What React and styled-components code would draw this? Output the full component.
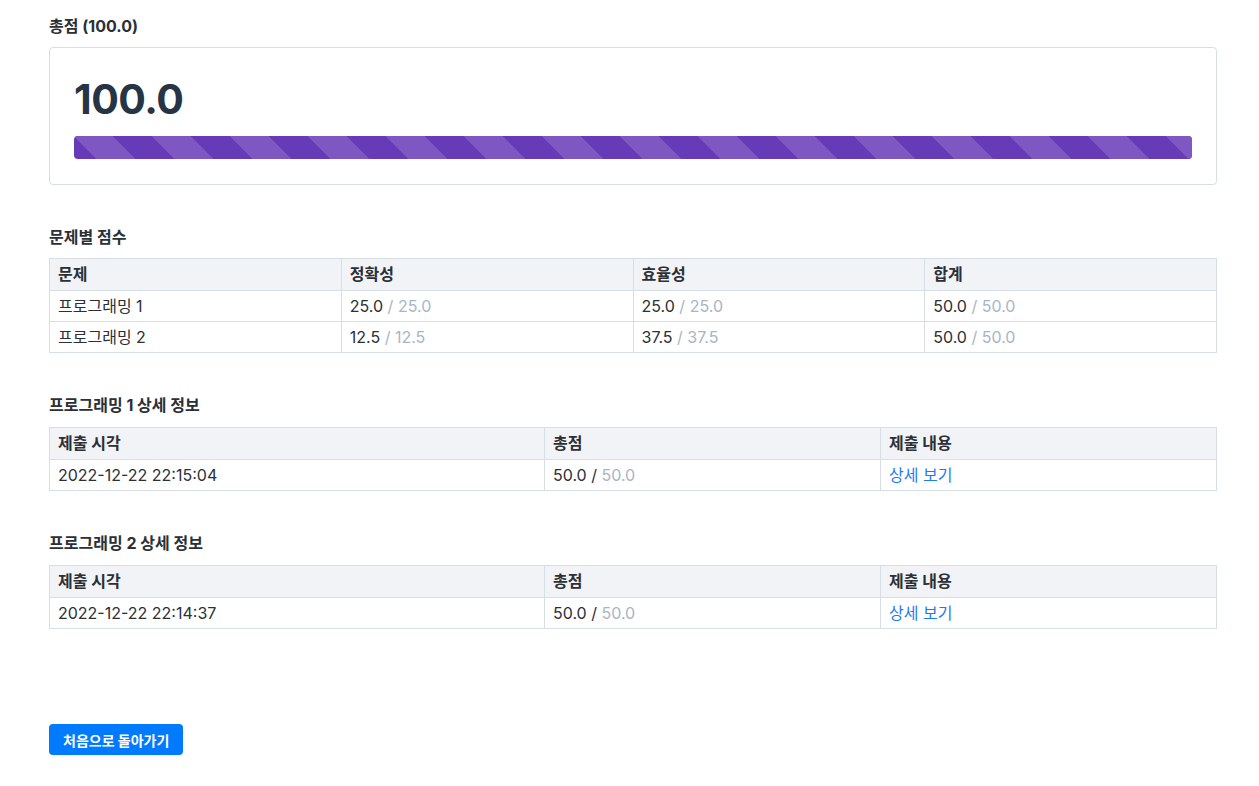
import React from 'react';
import styled, { createGlobalStyle } from 'styled-components';

const GlobalStyle = createGlobalStyle`
    body {
        margin: 0;
        background: #fff;
        font-family: Inter, "Noto Sans CJK KR", sans-serif;
        color: #2b2f36;
    }
`;

const Page = styled.div`
    padding: 16px 42px 30px 49px;
    width: 1168px;
`;

const SectionTitle = styled.h2`
    margin: ${({ $top }) => $top || 0}px 0 ${({ $bottom }) => $bottom || 11}px;
    font-size: 16px;
    line-height: 20px;
    font-weight: 700;
    color: #2b2f36;
`;

const Card = styled.div`
    border: 1px solid #d6dee8;
    border-radius: 4px;
    padding: 27px 24px 25px;
`;

const BigScore = styled.div`
    font-size: 41px;
    line-height: 48px;
    font-weight: 700;
    color: #263445;
    letter-spacing: -0.5px;
`;

const Progress = styled.div`
    margin-top: 13px;
    height: 23px;
    border-radius: 4px;
    overflow: hidden;
    background: #ebe6f5;
`;

const Bar = styled.div`
    height: 100%;
    background-color: #673ab7;
    background-image: linear-gradient(
        45deg,
        #7e57c2 25%,
        transparent 25%,
        transparent 50%,
        #7e57c2 50%,
        #7e57c2 75%,
        transparent 75%,
        transparent
    );
    background-size: 78px 78px;
`;

const Table = styled.table`
    width: 100%;
    border-collapse: collapse;
    table-layout: fixed;
    font-size: 16px;
`;

const Th = styled.th`
    text-align: left;
    font-weight: 700;
    background: #f2f3f7;
    border: 1px solid #d6dee8;
    padding: 5px 8px;
    line-height: 21px;
    width: ${({ $w }) => $w || 'auto'};
`;

const Td = styled.td`
    border: 1px solid #d6dee8;
    padding: 5px 8px 4px;
    line-height: 21px;
    color: #2b2f36;
`;

const Max = styled.span`
    color: #a9b5c4;
`;

const Slash = styled.span`
    color: ${({ $dark }) => ($dark ? '#2b2f36' : '#a9b5c4')};
`;

const Link = styled.a`
    color: #1a7cf5;
    text-decoration: none;
    cursor: pointer;
`;

const Button = styled.button`
    margin-top: 95px;
    height: 31px;
    padding: 0 14px;
    border: none;
    border-radius: 4px;
    background: #007bff;
    color: #fff;
    font-family: inherit;
    font-size: 14px;
    font-weight: 700;
    cursor: pointer;
`;

const Score = ({ got, max, dark }) => (
    <>
        {got} <Slash $dark={dark}>/</Slash> <Max>{max}</Max>
    </>
);

const problems = [
    { name: '프로그래밍 1', acc: ['25.0', '25.0'], eff: ['25.0', '25.0'], sum: ['50.0', '50.0'] },
    { name: '프로그래밍 2', acc: ['12.5', '12.5'], eff: ['37.5', '37.5'], sum: ['50.0', '50.0'] },
];

const details = [
    { name: '프로그래밍 1', time: '2022-12-22 22:15:04', score: ['50.0', '50.0'] },
    { name: '프로그래밍 2', time: '2022-12-22 22:14:37', score: ['50.0', '50.0'] },
];

const App = () => {
    return (
        <Page>
            <GlobalStyle />
            <SectionTitle>총점 (100.0)</SectionTitle>
            <Card>
                <BigScore>100.0</BigScore>
                <Progress>
                    <Bar style={{ width: '100%' }} />
                </Progress>
            </Card>

            <SectionTitle $top={42}>문제별 점수</SectionTitle>
            <Table>
                <thead>
                    <tr>
                        <Th>문제</Th>
                        <Th>정확성</Th>
                        <Th>효율성</Th>
                        <Th>합계</Th>
                    </tr>
                </thead>
                <tbody>
                    {problems.map((p) => (
                        <tr key={p.name}>
                            <Td>{p.name}</Td>
                            <Td><Score got={p.acc[0]} max={p.acc[1]} /></Td>
                            <Td><Score got={p.eff[0]} max={p.eff[1]} /></Td>
                            <Td><Score got={p.sum[0]} max={p.sum[1]} /></Td>
                        </tr>
                    ))}
                </tbody>
            </Table>

            {details.map((d) => (
                <React.Fragment key={d.name}>
                    <SectionTitle $top={42} $bottom={12}>{d.name} 상세 정보</SectionTitle>
                    <Table>
                        <thead>
                            <tr>
                                <Th $w="478px">제출 시각</Th>
                                <Th $w="319px">총점</Th>
                                <Th>제출 내용</Th>
                            </tr>
                        </thead>
                        <tbody>
                            <tr>
                                <Td>{d.time}</Td>
                                <Td><Score got={d.score[0]} max={d.score[1]} dark /></Td>
                                <Td><Link>상세 보기</Link></Td>
                            </tr>
                        </tbody>
                    </Table>
                </React.Fragment>
            ))}

            <Button>처음으로 돌아가기</Button>
        </Page>
    );
};

export default App;
